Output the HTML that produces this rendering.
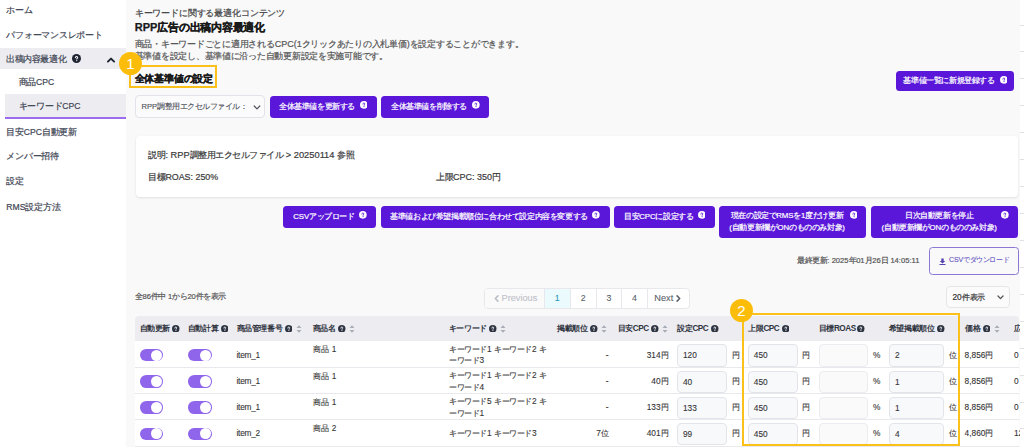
<!DOCTYPE html>
<html lang="ja"><head><meta charset="utf-8">
<style>
*{box-sizing:border-box;margin:0;padding:0}
html,body{width:1024px;height:447px;overflow:hidden}
body{position:relative;background:#f9f9fa;font-family:"Liberation Sans",sans-serif;color:#333;font-size:9px;-webkit-text-stroke:0.2px currentColor}
.a{position:absolute;white-space:nowrap}
.l{font-size:var(--lf,1em);letter-spacing:var(--lls,0)}
.t{line-height:14px}
.side{position:absolute;left:0;top:0;width:126px;height:447px;background:#fff}
.si{position:absolute;left:6.3px;height:14px;line-height:14px;font-size:9px;letter-spacing:-0.25px;color:#3f4654;--lf:8.6px;--lls:0}
.btn{position:absolute;background:#5b17d9;border-radius:3.5px;color:#fff;font-size:8px;letter-spacing:-0.4px;--lf:7.8px;--lls:-0.1px}
.bt{position:absolute;text-align:center;white-space:nowrap}
.badge{position:absolute;width:23px;height:23px;border-radius:50%;background:#fcbd0a;color:#fff;font-size:15px;line-height:23px;text-align:center;-webkit-text-stroke:0}
.obox{position:absolute;border:2px solid #fcc01a}
.th{position:absolute;white-space:nowrap;top:316px;height:25px;line-height:25px;font-weight:bold;font-size:8px;letter-spacing:-0.4px;color:#30343f;-webkit-text-stroke:0;--lf:8.2px;--lls:-0.45px}
.row{position:absolute;left:135px;width:884px;height:1px;background:#e9e9ed}
.tog{position:absolute;width:23.6px;height:12.6px;border-radius:6.3px;background:#8f66eb}
.tog:after{content:"";position:absolute;right:0.9px;top:0.9px;width:10.8px;height:10.8px;border-radius:50%;background:#fff}
.inp{position:absolute;height:22.2px;border:1px solid #e3e4ea;border-radius:4px;background:#f8f9fb;line-height:20.2px;padding-left:5px;font-size:8.3px;color:#333;-webkit-text-stroke:0.1px currentColor}
.td{position:absolute;font-size:8px;letter-spacing:-0.4px;color:#333;line-height:10.6px;white-space:nowrap;-webkit-text-stroke:0.1px currentColor;--lf:8.3px;--lls:0}
.r{text-align:right}
.inp.e{border-color:#ececf0;background:#fafafb}
.pg{border:1px solid #e8e8ec;border-radius:4px;background:#fff;overflow:hidden;font-size:8.8px;color:#5b5f69;-webkit-text-stroke:0.1px currentColor}
.pn{top:0;height:18.8px;line-height:18.8px;text-align:center;border-left:1px solid #e8e8ec}
</style></head><body>
<div class="side">
<div class="si" style="top:3px">ホーム</div>
<div class="si" style="top:28px">パフォーマンスレポート</div>
<div class="a" style="left:0;top:48px;width:126px;height:21px;background:#ededf1"></div>
<div class="si" style="top:52px;letter-spacing:-0.45px">出稿内容最適化</div>
<div class="a" style="left:71.5px;top:54.2px;width:9px;height:9px;line-height:0"><svg width="9" height="9" viewBox="0 0 16 16"><circle cx="8" cy="8" r="8" fill="#1f2533"/><path d="M6 6.4c0-1.2.9-2.1 2.1-2.1s2 .9 2 1.9c0 1.4-1.7 1.6-1.7 2.8" fill="none" stroke="#fff" stroke-width="1.9" stroke-linecap="round"/><circle cx="8.4" cy="11.6" r="1.15" fill="#fff"/></svg></div>
<svg class="a" style="left:106px;top:56.5px" width="10" height="6" viewBox="0 0 10 6"><path d="M1.9 4.6 L5 1.6 L8.1 4.6" fill="none" stroke="#1c2230" stroke-width="1.9" stroke-linecap="round" stroke-linejoin="round"/></svg>
<div class="a" style="left:5px;top:94px;width:121px;height:23px;background:#ededf1"></div>
<div class="a" style="left:5px;top:117px;width:121px;height:2px;background:#9b6cf0"></div>
<div class="si" style="top:75px;left:18.5px">商品<span class="l">CPC</span></div>
<div class="si" style="top:99px;left:18.5px">キーワード<span class="l">CPC</span></div>
<div class="si" style="top:125px">目安<span class="l">CPC</span>自動更新</div>
<div class="si" style="top:149px">メンバー招待</div>
<div class="si" style="top:174px">設定</div>
<div class="si" style="top:200px"><span class="l">RMS</span>設定方法</div>
</div>
<div class="a t" style="left:134.7px;top:6px;letter-spacing:-0.15px;color:#444">キーワードに関する最適化コンテンツ</div>
<div class="a t" style="left:134.7px;top:20px;font-size:11px;letter-spacing:-0.25px;font-weight:bold;color:#1a1a1a;-webkit-text-stroke:0.25px currentColor;--lls:0"><span class="l">RPP</span>広告の出稿内容最適化</div>
<div class="a t" style="left:134.7px;top:36.5px;letter-spacing:-0.25px;color:#555;--lls:0">商品・キーワードごとに適用される<span class="l">CPC(1</span>クリックあたりの入札単価<span class="l">)</span>を設定することができます。</div>
<div class="a t" style="left:134.7px;top:49px;letter-spacing:-0.27px;color:#555">基準値を設定し、基準値に沿った自動更新設定を実施可能です。</div>
<div class="obox" style="left:129px;top:65px;width:88px;height:22.5px"></div>
<div class="a t" style="left:134.7px;top:71.7px;font-size:10px;letter-spacing:-0.2px;font-weight:bold;color:#1a1a1a;-webkit-text-stroke:0.25px currentColor">全体基準値の設定</div>
<div class="badge" style="left:119px;top:52.3px">1</div>
<div class="btn" style="left:896px;top:71px;width:118px;height:20px"><div class="bt" style="left:7px;width:92px;top:4.0px;line-height:12px">基準値一覧に新規登録する</div><div class="a" style="left:103.5px;top:4.850000000000003px;width:7.7px;height:7.7px;line-height:0"><svg width="7.7" height="7.7" viewBox="0 0 16 16"><circle cx="8" cy="8" r="8" fill="#fff"/><path d="M6 6.4c0-1.2.9-2.1 2.1-2.1s2 .9 2 1.9c0 1.4-1.7 1.6-1.7 2.8" fill="none" stroke="#5b17d9" stroke-width="1.9" stroke-linecap="round"/><circle cx="8.4" cy="11.6" r="1.15" fill="#5b17d9"/></svg></div></div>
<div class="a" style="left:135px;top:95px;width:130px;height:23px;border:1px solid #e2e2e8;border-radius:4px;background:#fbfbfc;line-height:21px;padding-left:5.5px;font-size:8px;letter-spacing:-0.5px;color:#4a4d55;-webkit-text-stroke:0.1px currentColor;--lf:7.6px;--lls:0"><span class="l">RPP</span>調整用エクセルファイル：</div>
<svg class="a" style="left:252.5px;top:105px" width="8" height="5" viewBox="0 0 8 5"><path d="M1.2 1 L4 3.8 L6.8 1" fill="none" stroke="#50535b" stroke-width="1.2" stroke-linecap="round" stroke-linejoin="round"/></svg>
<div class="btn" style="left:270px;top:96px;width:107px;height:22px"><div class="bt" style="left:9px;width:76px;top:5.0px;line-height:12px">全体基準値を更新する</div><div class="a" style="left:89.60000000000002px;top:5.4499999999999975px;width:7.7px;height:7.7px;line-height:0"><svg width="7.7" height="7.7" viewBox="0 0 16 16"><circle cx="8" cy="8" r="8" fill="#fff"/><path d="M6 6.4c0-1.2.9-2.1 2.1-2.1s2 .9 2 1.9c0 1.4-1.7 1.6-1.7 2.8" fill="none" stroke="#5b17d9" stroke-width="1.9" stroke-linecap="round"/><circle cx="8.4" cy="11.6" r="1.15" fill="#5b17d9"/></svg></div></div>
<div class="btn" style="left:381px;top:96px;width:108px;height:22px"><div class="bt" style="left:10px;width:76px;top:5.0px;line-height:12px">全体基準値を削除する</div><div class="a" style="left:91px;top:5.4499999999999975px;width:7.7px;height:7.7px;line-height:0"><svg width="7.7" height="7.7" viewBox="0 0 16 16"><circle cx="8" cy="8" r="8" fill="#fff"/><path d="M6 6.4c0-1.2.9-2.1 2.1-2.1s2 .9 2 1.9c0 1.4-1.7 1.6-1.7 2.8" fill="none" stroke="#5b17d9" stroke-width="1.9" stroke-linecap="round"/><circle cx="8.4" cy="11.6" r="1.15" fill="#5b17d9"/></svg></div></div>
<div class="a" style="left:136px;top:136px;width:882px;height:61px;background:#fff;border-radius:4px;box-shadow:0 1px 2.5px rgba(0,0,0,.1)"></div>
<div class="a t" style="left:148.4px;top:148px;color:#3a3a3a;letter-spacing:-0.5px;--lf:9.3px;--lls:0">説明<span class="l">: RPP</span>調整用エクセルファイル<span class="l"> &gt; 20250114 </span>参照</div>
<div class="a t" style="left:148.4px;top:170px;color:#3a3a3a;letter-spacing:-0.5px;--lf:8.9px;--lls:0">目標<span class="l">ROAS: 250%</span></div>
<div class="a t" style="left:436px;top:170px;color:#3a3a3a;letter-spacing:-0.5px;--lf:9px;--lls:0">上限<span class="l">CPC: 350</span>円</div>
<div class="btn" style="left:283px;top:206px;width:93px;height:22px"><div class="bt" style="left:10px;width:62px;top:5.0px;line-height:12px"><span class="l">CSV</span>アップロード</div><div class="a" style="left:76px;top:5.450000000000012px;width:7.7px;height:7.7px;line-height:0"><svg width="7.7" height="7.7" viewBox="0 0 16 16"><circle cx="8" cy="8" r="8" fill="#fff"/><path d="M6 6.4c0-1.2.9-2.1 2.1-2.1s2 .9 2 1.9c0 1.4-1.7 1.6-1.7 2.8" fill="none" stroke="#5b17d9" stroke-width="1.9" stroke-linecap="round"/><circle cx="8.4" cy="11.6" r="1.15" fill="#5b17d9"/></svg></div></div>
<div class="btn" style="left:381px;top:206px;width:229px;height:22px"><div class="bt" style="left:9px;width:198px;top:5.0px;line-height:12px">基準値および希望掲載順位に合わせて設定内容を変更する</div><div class="a" style="left:211px;top:5.450000000000012px;width:7.7px;height:7.7px;line-height:0"><svg width="7.7" height="7.7" viewBox="0 0 16 16"><circle cx="8" cy="8" r="8" fill="#fff"/><path d="M6 6.4c0-1.2.9-2.1 2.1-2.1s2 .9 2 1.9c0 1.4-1.7 1.6-1.7 2.8" fill="none" stroke="#5b17d9" stroke-width="1.9" stroke-linecap="round"/><circle cx="8.4" cy="11.6" r="1.15" fill="#5b17d9"/></svg></div></div>
<div class="btn" style="left:614px;top:206px;width:101px;height:22px"><div class="bt" style="left:10px;width:69.5px;top:5.0px;line-height:12px">目安<span class="l">CPC</span>に設定する</div><div class="a" style="left:83.70000000000005px;top:5.450000000000012px;width:7.7px;height:7.7px;line-height:0"><svg width="7.7" height="7.7" viewBox="0 0 16 16"><circle cx="8" cy="8" r="8" fill="#fff"/><path d="M6 6.4c0-1.2.9-2.1 2.1-2.1s2 .9 2 1.9c0 1.4-1.7 1.6-1.7 2.8" fill="none" stroke="#5b17d9" stroke-width="1.9" stroke-linecap="round"/><circle cx="8.4" cy="11.6" r="1.15" fill="#5b17d9"/></svg></div></div>
<div class="btn" style="left:719px;top:206px;width:147px;height:32px"><div class="bt" style="left:6px;width:124px;top:3.6999999999999993px;line-height:12.3px">現在の設定で<span class="l">RMS</span>を<span class="l">1</span>度だけ更新<br><span class="l">(</span>自動更新欄が<span class="l">ON</span>のもののみ対象<span class="l">)</span></div><div class="a" style="left:130.5px;top:4.849999999999989px;width:7.7px;height:7.7px;line-height:0"><svg width="7.7" height="7.7" viewBox="0 0 16 16"><circle cx="8" cy="8" r="8" fill="#fff"/><path d="M6 6.4c0-1.2.9-2.1 2.1-2.1s2 .9 2 1.9c0 1.4-1.7 1.6-1.7 2.8" fill="none" stroke="#5b17d9" stroke-width="1.9" stroke-linecap="round"/><circle cx="8.4" cy="11.6" r="1.15" fill="#5b17d9"/></svg></div></div>
<div class="btn" style="left:871px;top:206px;width:147px;height:32px"><div class="bt" style="left:6px;width:124.29999999999995px;top:3.6999999999999993px;line-height:12.3px">日次自動更新を停止<br><span class="l">(</span>自動更新欄が<span class="l">ON</span>のもののみ対象<span class="l">)</span></div><div class="a" style="left:130.29999999999995px;top:4.849999999999989px;width:7.7px;height:7.7px;line-height:0"><svg width="7.7" height="7.7" viewBox="0 0 16 16"><circle cx="8" cy="8" r="8" fill="#fff"/><path d="M6 6.4c0-1.2.9-2.1 2.1-2.1s2 .9 2 1.9c0 1.4-1.7 1.6-1.7 2.8" fill="none" stroke="#5b17d9" stroke-width="1.9" stroke-linecap="round"/><circle cx="8.4" cy="11.6" r="1.15" fill="#5b17d9"/></svg></div></div>
<div class="a t" style="left:797px;top:254px;font-size:8px;letter-spacing:-0.4px;color:#555;--lf:7.6px;--lls:0">最終更新<span class="l">: 2025</span>年<span class="l">01</span>月<span class="l">26</span>日<span class="l"> 14:05:11</span></div>
<div class="a" style="left:929px;top:247.2px;width:90px;height:28.3px;border:1.7px solid #8c78d4;border-radius:3.5px;line-height:24.9px;padding-left:19px;font-size:7px;letter-spacing:-0.4px;color:#6150c0;-webkit-text-stroke:0.1px currentColor;--lf:7px;--lls:-0.1px"><span class="l">CSV</span>でダウンロード</div>
<svg class="a" style="left:939px;top:257.5px" width="7" height="7" viewBox="0 0 7 7"><path d="M2.3 0.5h2.4v2.6h1.6L3.5 5.6 0.7 3.1h1.6z M0.5 6h6v1h-6z" fill="#5443b0"/></svg>
<div class="a t" style="left:135px;top:289.5px;font-size:8px;letter-spacing:-0.4px;color:#555;--lf:7.6px;--lls:-0.1px">全<span class="l">86</span>件中<span class="l"> 1</span>から<span class="l">20</span>件を表示</div>
<div class="a pg" style="left:483.5px;top:288.3px;width:206.5px;height:20.8px">
<div class="a" style="left:0;top:0;width:59px;height:18.8px;background:#fafafb;color:#bfc1c8;padding-left:17px;line-height:18.8px;font-size:9.2px">Previous</div>
<svg class="a" style="left:9px;top:6.2px" width="5" height="7" viewBox="0 0 5 7"><path d="M3.9 0.9 L1.3 3.5 L3.9 6.1" fill="none" stroke="#b9bcc4" stroke-width="1.5" stroke-linecap="round" stroke-linejoin="round"/></svg>
<div class="a pn" style="left:59px;width:26.2px;background:#eafafd;color:#2b98ba">1</div>
<div class="a pn" style="left:85.2px;width:25.8px">2</div>
<div class="a pn" style="left:111px;width:25.7px">3</div>
<div class="a pn" style="left:136.7px;width:25.6px">4</div>
<div class="a pn" style="left:162.3px;width:43.5px;padding-left:6.5px;text-align:left;font-size:9.2px">Next</div>
<svg class="a" style="left:191.5px;top:6.2px" width="5" height="7" viewBox="0 0 5 7"><path d="M1.1 0.9 L3.7 3.5 L1.1 6.1" fill="none" stroke="#5b5f69" stroke-width="1.5" stroke-linecap="round" stroke-linejoin="round"/></svg>
</div>
<div class="a" style="left:946px;top:286px;width:64px;height:22px;border:1px solid #e6e6ea;border-radius:4px;background:#fbfbfc;line-height:20px;padding-left:5.5px;font-size:8px;letter-spacing:-0.2px;color:#333;--lf:8.3px;--lls:0"><span class="l">20</span>件表示</div>
<svg class="a" style="left:997px;top:295px" width="7" height="5" viewBox="0 0 7 5"><path d="M1 1 L3.5 3.6 L6 1" fill="none" stroke="#555" stroke-width="1.3" stroke-linecap="round" stroke-linejoin="round"/></svg>
<div class="a" style="left:135px;top:316px;width:884px;height:25px;background:#ededf1;border-radius:4px 4px 0 0"></div>
<div class="a" style="left:135px;top:341px;width:884px;height:106px;background:#fff"></div>
<div class="th" style="left:139.6px">自動更新</div>
<div class="a" style="left:172px;top:324.8px;width:7.5px;height:7.5px;line-height:0"><svg width="7.5" height="7.5" viewBox="0 0 16 16"><circle cx="8" cy="8" r="8" fill="#2d3340"/><path d="M6 6.4c0-1.2.9-2.1 2.1-2.1s2 .9 2 1.9c0 1.4-1.7 1.6-1.7 2.8" fill="none" stroke="#fff" stroke-width="1.9" stroke-linecap="round"/><circle cx="8.4" cy="11.6" r="1.15" fill="#fff"/></svg></div>
<div class="th" style="left:187.9px">自動計算</div>
<div class="a" style="left:220.7px;top:324.8px;width:7.5px;height:7.5px;line-height:0"><svg width="7.5" height="7.5" viewBox="0 0 16 16"><circle cx="8" cy="8" r="8" fill="#2d3340"/><path d="M6 6.4c0-1.2.9-2.1 2.1-2.1s2 .9 2 1.9c0 1.4-1.7 1.6-1.7 2.8" fill="none" stroke="#fff" stroke-width="1.9" stroke-linecap="round"/><circle cx="8.4" cy="11.6" r="1.15" fill="#fff"/></svg></div>
<div class="th" style="left:236.7px">商品管理番号</div>
<div class="a" style="left:284.8px;top:324.8px;width:7.5px;height:7.5px;line-height:0"><svg width="7.5" height="7.5" viewBox="0 0 16 16"><circle cx="8" cy="8" r="8" fill="#2d3340"/><path d="M6 6.4c0-1.2.9-2.1 2.1-2.1s2 .9 2 1.9c0 1.4-1.7 1.6-1.7 2.8" fill="none" stroke="#fff" stroke-width="1.9" stroke-linecap="round"/><circle cx="8.4" cy="11.6" r="1.15" fill="#fff"/></svg></div>
<svg class="a" style="left:296px;top:323.8px" width="6" height="10" viewBox="0 0 6 10"><path d="M0.5 4 L3 1.2 L5.5 4Z M0.5 6 L3 8.8 L5.5 6Z" fill="#a8acb6"/></svg>
<div class="th" style="left:312.7px">商品名</div>
<div class="a" style="left:338px;top:324.8px;width:7.5px;height:7.5px;line-height:0"><svg width="7.5" height="7.5" viewBox="0 0 16 16"><circle cx="8" cy="8" r="8" fill="#2d3340"/><path d="M6 6.4c0-1.2.9-2.1 2.1-2.1s2 .9 2 1.9c0 1.4-1.7 1.6-1.7 2.8" fill="none" stroke="#fff" stroke-width="1.9" stroke-linecap="round"/><circle cx="8.4" cy="11.6" r="1.15" fill="#fff"/></svg></div>
<svg class="a" style="left:348.8px;top:323.8px" width="6" height="10" viewBox="0 0 6 10"><path d="M0.5 4 L3 1.2 L5.5 4Z M0.5 6 L3 8.8 L5.5 6Z" fill="#a8acb6"/></svg>
<div class="th" style="left:448.8px">キーワード</div>
<div class="a" style="left:489px;top:324.8px;width:7.5px;height:7.5px;line-height:0"><svg width="7.5" height="7.5" viewBox="0 0 16 16"><circle cx="8" cy="8" r="8" fill="#2d3340"/><path d="M6 6.4c0-1.2.9-2.1 2.1-2.1s2 .9 2 1.9c0 1.4-1.7 1.6-1.7 2.8" fill="none" stroke="#fff" stroke-width="1.9" stroke-linecap="round"/><circle cx="8.4" cy="11.6" r="1.15" fill="#fff"/></svg></div>
<svg class="a" style="left:500px;top:323.8px" width="6" height="10" viewBox="0 0 6 10"><path d="M0.5 4 L3 1.2 L5.5 4Z M0.5 6 L3 8.8 L5.5 6Z" fill="#a8acb6"/></svg>
<div class="th" style="left:557.3px">掲載順位</div>
<div class="a" style="left:590px;top:324.8px;width:7.5px;height:7.5px;line-height:0"><svg width="7.5" height="7.5" viewBox="0 0 16 16"><circle cx="8" cy="8" r="8" fill="#2d3340"/><path d="M6 6.4c0-1.2.9-2.1 2.1-2.1s2 .9 2 1.9c0 1.4-1.7 1.6-1.7 2.8" fill="none" stroke="#fff" stroke-width="1.9" stroke-linecap="round"/><circle cx="8.4" cy="11.6" r="1.15" fill="#fff"/></svg></div>
<svg class="a" style="left:601.4px;top:323.8px" width="6" height="10" viewBox="0 0 6 10"><path d="M0.5 4 L3 1.2 L5.5 4Z M0.5 6 L3 8.8 L5.5 6Z" fill="#a8acb6"/></svg>
<div class="th" style="left:617.5px">目安<span class="l">CPC</span></div>
<div class="a" style="left:651px;top:324.8px;width:7.5px;height:7.5px;line-height:0"><svg width="7.5" height="7.5" viewBox="0 0 16 16"><circle cx="8" cy="8" r="8" fill="#2d3340"/><path d="M6 6.4c0-1.2.9-2.1 2.1-2.1s2 .9 2 1.9c0 1.4-1.7 1.6-1.7 2.8" fill="none" stroke="#fff" stroke-width="1.9" stroke-linecap="round"/><circle cx="8.4" cy="11.6" r="1.15" fill="#fff"/></svg></div>
<svg class="a" style="left:662px;top:323.8px" width="6" height="10" viewBox="0 0 6 10"><path d="M0.5 4 L3 1.2 L5.5 4Z M0.5 6 L3 8.8 L5.5 6Z" fill="#a8acb6"/></svg>
<div class="th" style="left:677.2px">設定<span class="l">CPC</span></div>
<div class="a" style="left:711px;top:324.8px;width:7.5px;height:7.5px;line-height:0"><svg width="7.5" height="7.5" viewBox="0 0 16 16"><circle cx="8" cy="8" r="8" fill="#2d3340"/><path d="M6 6.4c0-1.2.9-2.1 2.1-2.1s2 .9 2 1.9c0 1.4-1.7 1.6-1.7 2.8" fill="none" stroke="#fff" stroke-width="1.9" stroke-linecap="round"/><circle cx="8.4" cy="11.6" r="1.15" fill="#fff"/></svg></div>
<div class="th" style="left:748.2px">上限<span class="l">CPC</span></div>
<div class="a" style="left:781.6px;top:324.8px;width:7.5px;height:7.5px;line-height:0"><svg width="7.5" height="7.5" viewBox="0 0 16 16"><circle cx="8" cy="8" r="8" fill="#2d3340"/><path d="M6 6.4c0-1.2.9-2.1 2.1-2.1s2 .9 2 1.9c0 1.4-1.7 1.6-1.7 2.8" fill="none" stroke="#fff" stroke-width="1.9" stroke-linecap="round"/><circle cx="8.4" cy="11.6" r="1.15" fill="#fff"/></svg></div>
<div class="th" style="left:818.7px">目標<span class="l">ROAS</span></div>
<div class="a" style="left:857px;top:324.8px;width:7.5px;height:7.5px;line-height:0"><svg width="7.5" height="7.5" viewBox="0 0 16 16"><circle cx="8" cy="8" r="8" fill="#2d3340"/><path d="M6 6.4c0-1.2.9-2.1 2.1-2.1s2 .9 2 1.9c0 1.4-1.7 1.6-1.7 2.8" fill="none" stroke="#fff" stroke-width="1.9" stroke-linecap="round"/><circle cx="8.4" cy="11.6" r="1.15" fill="#fff"/></svg></div>
<div class="th" style="left:888.8px">希望掲載順位</div>
<div class="a" style="left:937px;top:324.8px;width:7.5px;height:7.5px;line-height:0"><svg width="7.5" height="7.5" viewBox="0 0 16 16"><circle cx="8" cy="8" r="8" fill="#2d3340"/><path d="M6 6.4c0-1.2.9-2.1 2.1-2.1s2 .9 2 1.9c0 1.4-1.7 1.6-1.7 2.8" fill="none" stroke="#fff" stroke-width="1.9" stroke-linecap="round"/><circle cx="8.4" cy="11.6" r="1.15" fill="#fff"/></svg></div>
<div class="th" style="left:965px">価格</div>
<div class="a" style="left:982.5px;top:324.8px;width:7.5px;height:7.5px;line-height:0"><svg width="7.5" height="7.5" viewBox="0 0 16 16"><circle cx="8" cy="8" r="8" fill="#2d3340"/><path d="M6 6.4c0-1.2.9-2.1 2.1-2.1s2 .9 2 1.9c0 1.4-1.7 1.6-1.7 2.8" fill="none" stroke="#fff" stroke-width="1.9" stroke-linecap="round"/><circle cx="8.4" cy="11.6" r="1.15" fill="#fff"/></svg></div>
<svg class="a" style="left:993.7px;top:323.8px" width="6" height="10" viewBox="0 0 6 10"><path d="M0.5 4 L3 1.2 L5.5 4Z M0.5 6 L3 8.8 L5.5 6Z" fill="#a8acb6"/></svg>
<div class="th" style="left:1013.7px">広告</div>
<div class="tog" style="left:139.5px;top:348.9px"></div>
<div class="tog" style="left:188.2px;top:348.9px"></div>
<div class="td" style="left:236.5px;top:349.5px;--lls:-0.25px"><span class="l">item_1</span></div>
<div class="td" style="left:313px;top:344.3px">商品 <span class="l">1</span></div>
<div class="td" style="left:449px;top:343.9px">キーワード<span class="l">1 </span>キーワード<span class="l">2 </span>キ<br>ーワード<span class="l">3</span></div>
<div class="td r" style="right:415.5px;top:349.5px"><span class="l">-</span></div>
<div class="td r" style="right:355.9px;top:349.5px"><span class="l">314</span>円</div>
<div class="inp" style="left:677px;top:344.4px;width:50px">120</div>
<div class="td" style="left:731.6px;top:350.8px">円</div>
<div class="inp" style="left:747.8px;top:344.4px;width:50px">450</div>
<div class="td" style="left:801.6px;top:350.8px">円</div>
<div class="inp e" style="left:818.5px;top:344.4px;width:49.5px"></div>
<div class="td" style="left:873px;top:349.5px"><span class="l">%</span></div>
<div class="inp" style="left:889px;top:344.4px;width:55.4px">2</div>
<div class="td" style="left:948.5px;top:350.8px">位</div>
<div class="td" style="left:964.6px;top:349.5px"><span class="l">8,856</span>円</div>
<div class="td" style="left:1014px;top:349.5px"><span class="l">0</span></div>
<div class="row" style="top:367.0px"></div>
<div class="tog" style="left:139.5px;top:375.1px"></div>
<div class="tog" style="left:188.2px;top:375.1px"></div>
<div class="td" style="left:236.5px;top:375.7px;--lls:-0.25px"><span class="l">item_1</span></div>
<div class="td" style="left:313px;top:370.5px">商品 <span class="l">1</span></div>
<div class="td" style="left:449px;top:370.1px">キーワード<span class="l">1 </span>キーワード<span class="l">2 </span>キ<br>ーワード<span class="l">4</span></div>
<div class="td r" style="right:415.5px;top:375.7px"><span class="l">-</span></div>
<div class="td r" style="right:355.9px;top:375.7px"><span class="l">40</span>円</div>
<div class="inp" style="left:677px;top:370.6px;width:50px">40</div>
<div class="td" style="left:731.6px;top:377.0px">円</div>
<div class="inp" style="left:747.8px;top:370.6px;width:50px">450</div>
<div class="td" style="left:801.6px;top:377.0px">円</div>
<div class="inp e" style="left:818.5px;top:370.6px;width:49.5px"></div>
<div class="td" style="left:873px;top:375.7px"><span class="l">%</span></div>
<div class="inp" style="left:889px;top:370.6px;width:55.4px">1</div>
<div class="td" style="left:948.5px;top:377.0px">位</div>
<div class="td" style="left:964.6px;top:375.7px"><span class="l">8,856</span>円</div>
<div class="td" style="left:1014px;top:375.7px"><span class="l">0</span></div>
<div class="row" style="top:393.2px"></div>
<div class="tog" style="left:139.5px;top:401.3px"></div>
<div class="tog" style="left:188.2px;top:401.3px"></div>
<div class="td" style="left:236.5px;top:401.9px;--lls:-0.25px"><span class="l">item_1</span></div>
<div class="td" style="left:313px;top:396.7px">商品 <span class="l">1</span></div>
<div class="td" style="left:449px;top:396.3px">キーワード<span class="l">5 </span>キーワード<span class="l">2 </span>キ<br>ーワード<span class="l">1</span></div>
<div class="td r" style="right:415.5px;top:401.9px"><span class="l">-</span></div>
<div class="td r" style="right:355.9px;top:401.9px"><span class="l">133</span>円</div>
<div class="inp" style="left:677px;top:396.8px;width:50px">133</div>
<div class="td" style="left:731.6px;top:403.2px">円</div>
<div class="inp" style="left:747.8px;top:396.8px;width:50px">450</div>
<div class="td" style="left:801.6px;top:403.2px">円</div>
<div class="inp e" style="left:818.5px;top:396.8px;width:49.5px"></div>
<div class="td" style="left:873px;top:401.9px"><span class="l">%</span></div>
<div class="inp" style="left:889px;top:396.8px;width:55.4px">1</div>
<div class="td" style="left:948.5px;top:403.2px">位</div>
<div class="td" style="left:964.6px;top:401.9px"><span class="l">8,856</span>円</div>
<div class="td" style="left:1014px;top:401.9px"><span class="l">0</span></div>
<div class="row" style="top:419.4px"></div>
<div class="tog" style="left:139.5px;top:427.5px"></div>
<div class="tog" style="left:188.2px;top:427.5px"></div>
<div class="td" style="left:236.5px;top:428.1px;--lls:-0.25px"><span class="l">item_2</span></div>
<div class="td" style="left:313px;top:422.9px">商品 <span class="l">2</span></div>
<div class="td" style="left:449px;top:428.1px">キーワード<span class="l">1 </span>キーワード<span class="l">3</span></div>
<div class="td r" style="right:415.5px;top:428.1px"><span class="l">7</span>位</div>
<div class="td r" style="right:355.9px;top:428.1px"><span class="l">401</span>円</div>
<div class="inp" style="left:677px;top:423.0px;width:50px">99</div>
<div class="td" style="left:731.6px;top:429.4px">円</div>
<div class="inp" style="left:747.8px;top:423.0px;width:50px">450</div>
<div class="td" style="left:801.6px;top:429.4px">円</div>
<div class="inp e" style="left:818.5px;top:423.0px;width:49.5px"></div>
<div class="td" style="left:873px;top:428.1px"><span class="l">%</span></div>
<div class="inp" style="left:889px;top:423.0px;width:55.4px">4</div>
<div class="td" style="left:948.5px;top:429.4px">位</div>
<div class="td" style="left:964.6px;top:428.1px"><span class="l">4,860</span>円</div>
<div class="td" style="left:1014px;top:428.1px"><span class="l">12</span></div>
<div class="row" style="top:445.5px"></div>
<div class="obox" style="left:742px;top:313px;width:218px;height:133px"></div>
<div class="badge" style="left:729.8px;top:299.4px">2</div>
<div class="a" style="left:1020px;top:0;width:4px;height:447px;background:#fff"></div>
<div class="a" style="left:1020px;top:24.5px;width:4px;height:1px;background:#e0e0e4"></div>
<div class="a" style="left:1020px;top:51.4px;width:4px;height:1px;background:#e0e0e4"></div>
<div class="a" style="left:1020px;top:78.4px;width:4px;height:1px;background:#e0e0e4"></div>
<div class="a" style="left:1020px;top:105.3px;width:4px;height:1px;background:#e0e0e4"></div>
<div class="a" style="left:1020px;top:132.2px;width:4px;height:1px;background:#e0e0e4"></div>
<div class="a" style="left:1020px;top:159.2px;width:4px;height:1px;background:#e0e0e4"></div>
<div class="a" style="left:1020px;top:186.1px;width:4px;height:1px;background:#e0e0e4"></div>
<div class="a" style="left:1020px;top:213.0px;width:4px;height:1px;background:#e0e0e4"></div>
<div class="a" style="left:1020px;top:239.9px;width:4px;height:1px;background:#e0e0e4"></div>
<div class="a" style="left:1020px;top:266.9px;width:4px;height:1px;background:#e0e0e4"></div>
<div class="a" style="left:1020px;top:293.8px;width:4px;height:1px;background:#e0e0e4"></div>
<div class="a" style="left:1020px;top:320.7px;width:4px;height:1px;background:#e0e0e4"></div>
<div class="a" style="left:1020px;top:347.7px;width:4px;height:1px;background:#e0e0e4"></div>
<div class="a" style="left:1020px;top:374.6px;width:4px;height:1px;background:#e0e0e4"></div>
<div class="a" style="left:1020px;top:401.5px;width:4px;height:1px;background:#e0e0e4"></div>
<div class="a" style="left:1020px;top:428.4px;width:4px;height:1px;background:#e0e0e4"></div>
</body></html>
